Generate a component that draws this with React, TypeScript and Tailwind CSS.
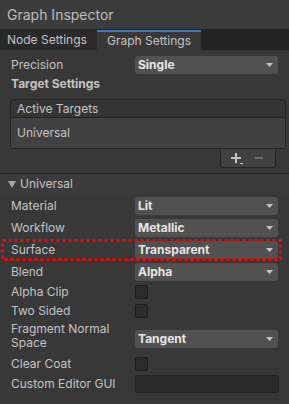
import React from "react";

const Caret = () => (
  <svg width="7" height="4" viewBox="0 0 7 4" className="shrink-0">
    <path d="M0 0H7L3.5 4Z" fill="#c4c4c4" />
  </svg>
);

const Dropdown = ({ value }: { value: string }) => (
  <div className="flex h-[18px] w-[143px] shrink-0 items-center justify-between rounded-[3px] bg-[#515151] pl-[3px] pr-[5px]">
    <span className="text-[12px] font-bold leading-none text-[#e6e6e6]">{value}</span>
    <Caret />
  </div>
);

const Checkbox = () => (
  <div className="h-[14px] w-[13px] shrink-0 rounded-[2px] border border-[#1c1c1c] bg-[#2b2b2b]" />
);

const Label = ({ children }: { children: React.ReactNode }) => (
  <div className="w-[124px] shrink-0 text-[12px] leading-[14px] text-[#c4c4c4]">{children}</div>
);

export default function App() {
  return (
    <div
      className="flex h-[404px] w-[289px] flex-col overflow-hidden bg-[#383838]"
      style={{ fontFamily: "Inter, 'Noto Sans', sans-serif" }}
    >
      {/* Title */}
      <div className="h-[29px] shrink-0 bg-[#3c3c3c] pl-[7px] pt-[2px]">
        <span className="text-[14px] leading-[20px] text-[#bdbdbd]">Graph Inspector</span>
      </div>
      {/* Tabs */}
      <div className="flex h-[21px] shrink-0 border-t border-[#232323] bg-[#232323]">
        <div className="flex w-[97px] items-center bg-[#2a2a2a] pl-[7px] text-[12px] text-[#c4c4c4]">
          Node Settings
        </div>
        <div className="flex w-[104px] items-center border-t-2 border-[#3a79bb] bg-[#383838] pl-[10px] text-[12px] text-[#c4c4c4]">
          Graph Settings
        </div>
      </div>

      {/* Body */}
      <div className="flex flex-col">
        <div className="mt-[6px] flex h-[18px] items-center pl-[11px]">
          <Label>Precision</Label>
          <Dropdown value="Single" />
        </div>
        <div className="mt-[2px] flex h-[15px] items-center pl-[11px] text-[12px] font-bold text-[#c4c4c4]">
          Target Settings
        </div>

        {/* Active targets list */}
        <div className="ml-[10px] mt-[8px] w-[276px] overflow-hidden rounded-[3px] border border-[#242424]">
          <div className="flex h-[18px] items-center border-b border-[#242424] bg-[#353535] pl-[6px] text-[12px] text-[#c4c4c4]">
            Active Targets
          </div>
          <div className="flex h-[30px] items-center bg-[#414141] pl-[6px] text-[12px] text-[#c4c4c4]">
            Universal
          </div>
        </div>
        <div className="ml-[220px] flex h-[19px] w-[56px] items-center gap-[14px] rounded-b-[3px] border border-t-0 border-[#242424] bg-[#414141] pl-[10px]">
          <div className="relative h-[10px] w-[10px]">
            <div className="absolute left-0 top-[4px] h-[2px] w-[10px] bg-[#c4c4c4]" />
            <div className="absolute left-[4px] top-0 h-[10px] w-[2px] bg-[#c4c4c4]" />
            <div className="absolute left-[9px] top-[10px] h-[1px] w-[3px] bg-[#c4c4c4]" />
          </div>
          <div className="h-[2px] w-[8px] bg-[#6a6a6a]" />
        </div>

        {/* Foldout */}
        <div className="mt-[5px] flex h-[21px] items-center border-t border-[#232323] bg-[#3b3b3b] pl-[8px] text-[12px] text-[#c4c4c4]">
          <svg width="8" height="7" viewBox="0 0 8 7" className="mr-[4px]">
            <path d="M0 0H8L4 7Z" fill="#a8a8a8" />
          </svg>
          Universal
        </div>

        <div className="mt-[3px] flex h-[18px] items-center pl-[11px]">
          <Label>Material</Label>
          <Dropdown value="Lit" />
        </div>
        <div className="mt-[4px] flex h-[18px] items-center pl-[11px]">
          <Label>Workflow</Label>
          <Dropdown value="Metallic" />
        </div>
        <div className="relative mt-[4px] flex h-[18px] items-center pl-[11px]">
          <Label>Surface</Label>
          <Dropdown value="Transparent" />
          <svg
            className="pointer-events-none absolute left-[1px] top-[-2px]"
            width="281"
            height="22"
            viewBox="0 0 281 22"
          >
            <rect x="1.5" y="1.5" width="278" height="19" fill="none" stroke="#ff0000" strokeWidth="3" strokeDasharray="3 3" />
          </svg>
        </div>
        <div className="mt-[4px] flex h-[18px] items-center pl-[11px]">
          <Label>Blend</Label>
          <Dropdown value="Alpha" />
        </div>
        <div className="mt-[2px] flex h-[18px] items-center pl-[11px]">
          <Label>Alpha Clip</Label>
          <Checkbox />
        </div>
        <div className="mt-[1px] flex h-[18px] items-center pl-[11px]">
          <Label>Two Sided</Label>
          <Checkbox />
        </div>
        <div className="mt-[2px] flex h-[28px] items-start pl-[11px]">
          <Label>
            Fragment Normal
            <br />
            Space
          </Label>
          <div className="mt-[8px]">
            <Dropdown value="Tangent" />
          </div>
        </div>
        <div className="mt-[5px] flex h-[18px] items-center pl-[11px]">
          <Label>Clear Coat</Label>
          <Checkbox />
        </div>
        <div className="mt-[2px] flex h-[18px] items-center pl-[11px]">
          <Label>Custom Editor GUI</Label>
          <div className="h-[18px] w-[144px] shrink-0 rounded-[3px] border border-[#212121] bg-[#2a2a2a]" />
        </div>
      </div>
    </div>
  );
}
